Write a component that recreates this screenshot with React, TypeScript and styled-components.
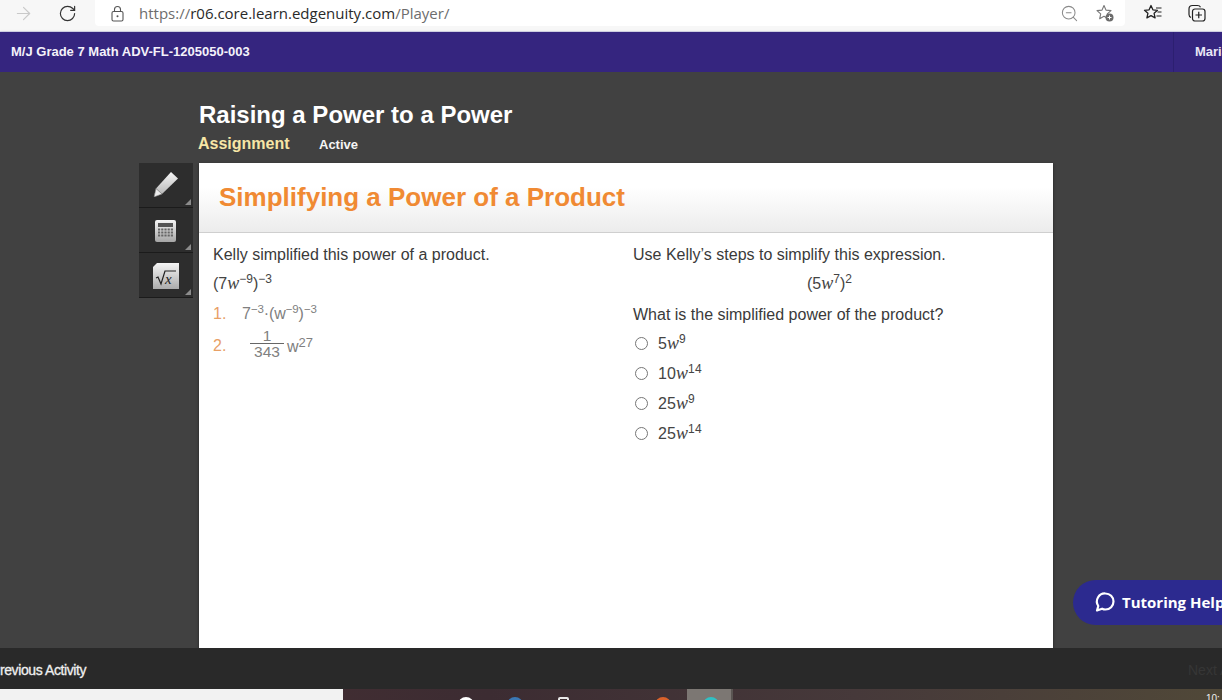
import React from 'react';
import styled, { createGlobalStyle } from 'styled-components';
import { ArrowRight, RotateCw, ZoomOut } from 'lucide-react';

const GlobalStyle = createGlobalStyle`
  html, body {
    margin: 0;
    padding: 0;
    height: 100%;
    overflow: hidden;
    background: #414141;
    font-family: "Liberation Sans", Arial, sans-serif;
  }
  * {
    box-sizing: border-box;
  }
`;

const choices = [
  { lead: '5', power: '9' },
  { lead: '10', power: '14' },
  { lead: '25', power: '9' },
  { lead: '25', power: '14' },
];

function App() {
  return (
    <Page>
      <GlobalStyle />
      <BrowserBar>
        <NavSlot $width={46}>
          <ArrowRight size={21} color="#c9c9c9" strokeWidth={1.3} />
        </NavSlot>
        <NavSlot $width={42}>
          <RotateCw size={19} color="#333" strokeWidth={1.5} />
        </NavSlot>
        <UrlBox>
          <svg width="15" height="17" viewBox="0 0 15 17" fill="none">
            <path d="M4.500 7V4.500a3 3 0 0 1 6 0V7" stroke="#555" strokeWidth="1.100" />
            <rect x="2" y="6.500" width="11" height="9.500" rx="1.500" stroke="#555" strokeWidth="1.100" />
            <circle cx="7.500" cy="11.200" r="1" fill="#555" />
          </svg>
          <Url>
            https://<b>r06.core.learn.edgenuity.com</b>/Player/
          </Url>
          <UrlIcons>
            <ZoomOut size={19} color="#8a8a8a" strokeWidth={1.3} />
            <svg width="20" height="20" viewBox="0 0 20 20" fill="none">
              <path
                d="M9 2.500l2 4.600 5 .5-3.700 3.300 1 4.800L9 13.200l-4.300 2.500 1-4.800L2 7.600l5-.5z"
                stroke="#777"
                strokeWidth="1.100"
                strokeLinejoin="round"
              />
              <circle cx="14.500" cy="14.500" r="4" fill="#6b6b6b" />
              <path d="M14.500 12.500v4M12.500 14.500h4" stroke="#fff" strokeWidth="1" />
            </svg>
          </UrlIcons>
        </UrlBox>
        <BarIcons>
          <svg width="20" height="20" viewBox="0 0 20 20" fill="none">
            <path
              d="M8 2.500l1.900 4.300 4.600.5-3.400 3 1 4.600L8 12.600l-4.100 2.300 1-4.600-3.400-3 4.600-.5z"
              stroke="#222"
              strokeWidth="1.300"
              strokeLinejoin="round"
            />
            <path d="M13 5h5.500M14.500 9h4M13.500 13h5" stroke="#222" strokeWidth="1.200" />
          </svg>
          <svg width="20" height="20" viewBox="0 0 20 20" fill="none">
            <path
              d="M4 14.500C2.600 14 2 13 2 11.500V6c0-2 1.500-3.500 3.500-3.500h5c1.500 0 2.500.6 3 1.800"
              stroke="#222"
              strokeWidth="1.200"
            />
            <rect x="5.500" y="6" width="12.500" height="12" rx="2.500" stroke="#222" strokeWidth="1.200" />
            <path d="M11.750 8.800v6.400M8.500 12h6.500" stroke="#222" strokeWidth="1.200" />
          </svg>
        </BarIcons>
      </BrowserBar>

      <CourseBar>
        <CourseName>M/J Grade 7 Math ADV-FL-1205050-003</CourseName>
        <UserName>Maria Hernandez</UserName>
      </CourseBar>

      <Stage>
        <TitleBlock>
          <LessonTitle>Raising a Power to a Power</LessonTitle>
          <TitleMeta>
            <AssignmentLabel>Assignment</AssignmentLabel>
            <ActiveLabel>Active</ActiveLabel>
          </TitleMeta>
        </TitleBlock>

        <Workspace>
          <ToolRail>
            <ToolButton>
              <PencilIcon width="26" height="26" viewBox="0 0 26 26">
                <defs>
                  <linearGradient id="pencilFill" x1="0" y1="0" x2="0" y2="1">
                    <stop offset="0" stopColor="#f6f6f6" />
                    <stop offset="1" stopColor="#b0b0b0" />
                  </linearGradient>
                </defs>
                <path d="M18 1l7 6.500L9 23l-8 3 2-8.500z" fill="url(#pencilFill)" />
                <path d="M3 17.500L9 23l-8 3z" fill="#ececec" stroke="#666" strokeWidth=".6" />
              </PencilIcon>
            </ToolButton>
            <ToolButton>
              <CalcIcon width="22" height="23" viewBox="0 0 22 23">
                <defs>
                  <linearGradient id="calcFill" x1="0" y1="0" x2="0" y2="1">
                    <stop offset="0" stopColor="#f5f5f5" />
                    <stop offset="1" stopColor="#a5a5a5" />
                  </linearGradient>
                </defs>
                <rect width="21" height="22" rx="2" fill="url(#calcFill)" />
                <rect x="3" y="3" width="15" height="4" fill="#555" />
                <path
                  d="M3 9.500h15M3 12.500h15M3 15.500h15"
                  stroke="#666"
                  strokeWidth="2"
                  strokeDasharray="2.200 1"
                />
              </CalcIcon>
            </ToolButton>
            <ToolButton>
              <MathToolIcon>
                <FoldCorner />
                <svg width="26" height="26" viewBox="0 0 26 26">
                  <defs>
                    <linearGradient id="mathFill" x1="0" y1="0" x2="0" y2="1">
                      <stop offset="0" stopColor="#f5f5f5" />
                      <stop offset="1" stopColor="#ababab" />
                    </linearGradient>
                  </defs>
                  <rect width="26" height="26" fill="url(#mathFill)" />
                  <path d="M3 15l2-1 3 7 4-13h11" fill="none" stroke="#222" strokeWidth="1.200" />
                </svg>
                <RootLetter>x</RootLetter>
              </MathToolIcon>
            </ToolButton>
          </ToolRail>

          <Card>
            <CardHeader>
              <CardTitle>Simplifying a Power of a Product</CardTitle>
            </CardHeader>
            <Columns>
              <Column>
                <Prompt>Kelly simplified this power of a product.</Prompt>
                <LeadFormula>
                  (7<MathVar>w</MathVar>
                  <Sup>−9</Sup>)<Sup>−3</Sup>
                </LeadFormula>
                <Step>
                  <StepNumber>1.</StepNumber>
                  <StepBody>
                    7<StepSup>−3</StepSup>·(w<StepSup>−9</StepSup>)<StepSup>−3</StepSup>
                  </StepBody>
                </Step>
                <Step>
                  <StepNumber>2.</StepNumber>
                  <StepBody>
                    <Fraction>
                      <span>1</span>
                      <span>343</span>
                    </Fraction>
                    w<PowerSup>27</PowerSup>
                  </StepBody>
                </Step>
              </Column>
              <Column>
                <Prompt>Use Kelly’s steps to simplify this expression.</Prompt>
                <CenteredFormula>
                  (5<MathVar>w</MathVar>
                  <Sup>7</Sup>)<Sup>2</Sup>
                </CenteredFormula>
                <QuestionPrompt>What is the simplified power of the product?</QuestionPrompt>
                <ChoiceList>
                  {choices.map((choice, i) => (
                    <Choice key={i}>
                      <Radio />
                      <ChoiceText>
                        {choice.lead}
                        <MathVar>w</MathVar>
                        <Sup>{choice.power}</Sup>
                      </ChoiceText>
                    </Choice>
                  ))}
                </ChoiceList>
              </Column>
            </Columns>
          </Card>
        </Workspace>

        <TutoringPill>
          <svg width="22" height="22" viewBox="0 0 22 22" fill="none">
            <path
              d="M11.500 2.500a8 8 0 0 1 0 16c-1.200 0-2.400-.3-3.400-.8L3 19.500l1.300-4.500A8 8 0 0 1 11.500 2.500z"
              stroke="#fff"
              strokeWidth="2.200"
              strokeLinejoin="round"
            />
          </svg>
          Tutoring Help
        </TutoringPill>
      </Stage>

      <FooterBar>
        <PrevLink>Previous Activity</PrevLink>
        <NextLink>Next Activity</NextLink>
      </FooterBar>

      <Taskbar>
        <SearchBox />
        <TaskIcons>
          <TaskDot $color="#ffffff" $left={115} />
          <TaskDot $color="#3a78b5" $left={164} />
          <TaskSquare />
          <TaskDot $color="#d9622b" $left={312} />
          <ActiveTask>
            <TaskDot $color="#31c0c4" $left={16} />
          </ActiveTask>
        </TaskIcons>
        <Clock>10:</Clock>
      </Taskbar>
    </Page>
  );
}

export default App;

const Page = styled.div`
  width: 1222px;
  height: 700px;
  display: flex;
  flex-direction: column;
  overflow: hidden;
  background: #414141;
`;

const BrowserBar = styled.div`
  height: 32px;
  flex: none;
  display: flex;
  align-items: flex-start;
  background: #f7f7f7;
  border-bottom: 1px solid #dcdcf0;
`;

const NavSlot = styled.div<{ $width: number }>`
  width: ${({ $width }) => $width}px;
  height: 26px;
  flex: none;
  display: flex;
  align-items: center;
  justify-content: center;
`;

const UrlBox = styled.div`
  width: 1030px;
  height: 26px;
  flex: none;
  display: flex;
  align-items: center;
  margin-left: 7px;
  padding-left: 15px;
  background: #fff;
  border-radius: 0 0 4px 4px;
`;

const Url = styled.span`
  margin-left: 14px;
  flex: 1;
  font-family: "Open Sans", "Liberation Sans", sans-serif;
  font-size: 15px;
  color: #6d6d6d;

  & b {
    font-weight: 400;
    color: #2a2a2a;
  }
`;

const UrlIcons = styled.div`
  display: flex;
  align-items: center;
  gap: 16px;
  padding-right: 10px;
`;

const BarIcons = styled.div`
  height: 26px;
  display: flex;
  align-items: center;
  gap: 24px;
  margin-left: 18px;
`;

const CourseBar = styled.div`
  height: 40px;
  flex: none;
  display: flex;
  align-items: center;
  justify-content: space-between;
  background: #35257f;
  box-shadow: 0 1px 3px rgba(0, 0, 0, 0.4);
  position: relative;
  white-space: nowrap;
  overflow: hidden;
`;

const CourseName = styled.div`
  margin: 0 0 2px 11px;
  font-size: 13px;
  font-weight: 700;
  color: #f4f2fa;
`;

const UserName = styled.div`
  width: 49px;
  height: 100%;
  flex: none;
  display: flex;
  align-items: center;
  padding: 0 0 2px 21px;
  border-left: 1px solid #2c1f70;
  overflow: hidden;
  font-size: 13px;
  font-weight: 700;
  color: #e9e6f5;
`;

const Stage = styled.div`
  position: relative;
  flex: 1;
  min-height: 0;
  display: flex;
  flex-direction: column;
  padding-left: 139px;
  background: #414141;
`;

const TitleBlock = styled.div`
  height: 91px;
  flex: none;
  padding: 29px 0 0 60px;
`;

const LessonTitle = styled.h1`
  margin: 0;
  font-size: 24px;
  line-height: 28px;
  font-weight: 700;
  color: #fff;
`;

const TitleMeta = styled.div`
  display: flex;
  align-items: center;
  height: 18px;
  margin-top: 6px;
  margin-left: -1px;
`;

const AssignmentLabel = styled.span`
  width: 121px;
  font-size: 16px;
  font-weight: 700;
  color: #f7e6a6;
`;

const ActiveLabel = styled.span`
  padding-top: 1px;
  font-size: 13px;
  font-weight: 700;
  color: #f5f5f5;
`;

const Workspace = styled.div`
  flex: 1;
  min-height: 0;
  display: flex;
  gap: 6px;
`;

const ToolRail = styled.div`
  width: 54px;
  flex: none;
  align-self: flex-start;
  display: flex;
  flex-direction: column;
`;

const ToolButton = styled.div`
  position: relative;
  height: 45px;
  display: flex;
  align-items: center;
  justify-content: center;
  background: #2d2d2d;
  border-bottom: 1px solid #1b1b1b;

  &::after {
    content: '';
    position: absolute;
    right: 2px;
    bottom: 2px;
    border-style: solid;
    border-width: 0 0 6px 6px;
    border-color: transparent transparent #8c8c8c transparent;
  }
`;

const PencilIcon = styled.svg`
  margin-bottom: 2px;
`;

const CalcIcon = styled.svg`
  margin-top: 2px;
`;

const MathToolIcon = styled.div`
  position: relative;
  width: 26px;
  height: 26px;
  margin-top: 2px;
  line-height: 0;
`;

const FoldCorner = styled.span`
  position: absolute;
  top: -1px;
  left: -1px;
  z-index: 1;
  border-style: solid;
  border-width: 6px 6px 0 0;
  border-color: #2d2d2d transparent transparent transparent;
`;

const RootLetter = styled.span`
  position: absolute;
  top: 9px;
  left: 12px;
  font-family: "Liberation Serif", serif;
  font-style: italic;
  font-size: 15px;
  line-height: 15px;
  color: #222;
`;

const Card = styled.div`
  width: 854px;
  flex: none;
  background: #fff;
  box-shadow: 0 1px 3px rgba(0, 0, 0, 0.45);
`;

const CardHeader = styled.div`
  height: 70px;
  display: flex;
  align-items: center;
  padding: 0 0 1px 20px;
  background: linear-gradient(#fff 35%, #ececec);
  border-bottom: 1px solid #cfcfcf;
`;

const CardTitle = styled.h2`
  margin: 0;
  font-size: 26px;
  font-weight: 700;
  color: #f08a33;
`;

const Columns = styled.div`
  display: grid;
  grid-template-columns: 420px 1fr;
  padding: 12px 14px 0;
`;

const Column = styled.div`
  display: flex;
  flex-direction: column;
  font-size: 16px;
  color: #333;
`;

const Prompt = styled.p`
  margin: 0;
  height: 28px;
  line-height: 20px;
  font-size: 16px;
  color: #3a3a3a;
`;

const QuestionPrompt = styled(Prompt)`
  height: 23px;
`;

const Formula = styled.div`
  line-height: 20px;
  font-size: 16px;
  color: #444;
`;

const LeadFormula = styled(Formula)`
  height: 25px;
`;

const CenteredFormula = styled(Formula)`
  height: 32px;
  padding-left: 174px;
`;

const MathVar = styled.i`
  font-family: "Liberation Serif", serif;
  font-size: 18px;
`;

const Sup = styled.sup`
  font-size: 12px;
  line-height: 0;
  vertical-align: 6px;
`;

const StepSup = styled(Sup)`
  font-size: 11.5px;
  letter-spacing: -0.2px;
`;

const PowerSup = styled(Sup)`
  font-size: 13px;
  vertical-align: 5px;
`;

const Step = styled.div`
  display: flex;
  align-items: center;
  height: 32px;
  color: #808080;
  font-size: 16px;
`;

const StepNumber = styled.span`
  width: 29px;
  flex: none;
  color: #e8a066;
`;

const StepBody = styled.span`
  white-space: pre;
`;

const Fraction = styled.span`
  display: inline-flex;
  flex-direction: column;
  align-items: center;
  width: 34px;
  margin: -6px 3px 0 8px;
  vertical-align: 11px;
  font-size: 15.5px;
  line-height: 15px;

  & span:first-child {
    width: 100%;
    text-align: center;
    border-bottom: 1px solid #666;
  }
`;

const ChoiceList = styled.div`
  display: flex;
  flex-direction: column;
`;

const Choice = styled.label`
  height: 30px;
  display: flex;
  align-items: center;
  gap: 10px;
  padding-left: 2px;
  font-size: 16px;
  color: #444;
`;

const ChoiceText = styled.span`
  letter-spacing: 0.1px;
`;

const Radio = styled.span`
  width: 13px;
  height: 13px;
  flex: none;
  border: 1px solid #767676;
  border-radius: 50%;
  background: #fff;
`;

const TutoringPill = styled.div`
  position: absolute;
  left: 1073px;
  top: 508px;
  width: 180px;
  height: 45px;
  display: flex;
  align-items: center;
  gap: 6px;
  padding: 0 0 1px 21px;
  border-radius: 23px 0 0 23px;
  background: #2c2a8f;
  font-family: "Open Sans", "Liberation Sans", sans-serif;
  font-size: 15px;
  font-weight: 700;
  color: #fff;
  white-space: nowrap;
`;

const FooterBar = styled.div`
  height: 41px;
  flex: none;
  display: flex;
  align-items: center;
  justify-content: space-between;
  padding-top: 3px;
  background: #292929;
  white-space: nowrap;
  overflow: hidden;
  position: relative;
`;

const PrevLink = styled.div`
  margin-left: -9px;
  font-size: 14px;
  font-weight: 400;
  letter-spacing: -0.4px;
  -webkit-text-stroke: 0.3px #f0f0f0;
  color: #f0f0f0;
`;

const NextLink = styled.div`
  width: 34px;
  flex: none;
  overflow: hidden;
  font-size: 14px;
  color: #363636;
`;

const Taskbar = styled.div`
  height: 11px;
  flex: none;
  display: flex;
  align-items: stretch;
  overflow: hidden;
  background: linear-gradient(90deg, #4a3033, #3c2c32 40%, #46393a 70%, #504838);
`;

const SearchBox = styled.div`
  width: 343px;
  flex: none;
  background: #f2f2f2;
`;

const TaskIcons = styled.div`
  position: relative;
  flex: 1;
`;

const TaskDot = styled.span<{ $color: string; $left: number }>`
  position: absolute;
  top: 8px;
  left: ${({ $left }) => $left}px;
  width: 16px;
  height: 16px;
  border-radius: 50%;
  background: ${({ $color }) => $color};
`;

const TaskSquare = styled.span`
  position: absolute;
  top: 8px;
  left: 215px;
  width: 11px;
  height: 12px;
  border: 2px solid #e9e9e9;
  border-radius: 2px;
`;

const ActiveTask = styled.div`
  position: absolute;
  top: 0;
  left: 344px;
  width: 46px;
  height: 100%;
  background: #7c7773;
  border-right: 2px solid #5a5552;
`;

const Clock = styled.div`
  width: 16px;
  flex: none;
  font-size: 10px;
  line-height: 11px;
  padding-top: 4px;
  color: #eee;
`;
